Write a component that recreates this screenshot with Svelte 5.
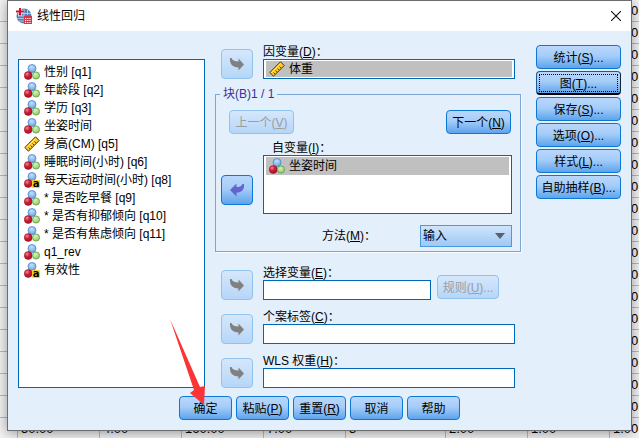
<script>
  const variables = [
    { name: "性别 [q1]", type: "nominal" },
    { name: "年龄段 [q2]", type: "nominal" },
    { name: "学历 [q3]", type: "nominal" },
    { name: "坐姿时间", type: "nominal" },
    { name: "身高(CM) [q5]", type: "scale" },
    { name: "睡眠时间(小时) [q6]", type: "nominal" },
    { name: "每天运动时间(小时) [q8]", type: "string" },
    { name: "* 是否吃早餐 [q9]", type: "nominal" },
    { name: "* 是否有抑郁倾向 [q10]", type: "nominal" },
    { name: "* 是否有焦虑倾向 [q11]", type: "nominal" },
    { name: "q1_rev", type: "nominal" },
    { name: "有效性", type: "string" },
  ];

  const options = [
    { text: "统计", key: "S" },
    { text: "图", key: "T" },
    { text: "保存", key: "S" },
    { text: "选项", key: "O" },
    { text: "样式", key: "L" },
    { text: "自助抽样", key: "B" },
  ];

  const actions = [
    { text: "确定" },
    { text: "粘贴", key: "P" },
    { text: "重置", key: "R" },
    { text: "取消" },
    { text: "帮助" },
  ];

  // only the last column and the last record stick out from behind the dialog
  const blank = ["", "", "", "", "", "", "", "1.00"];
  const record = ["50.00", "4.00", "160.00", "7.00", "3", "2.00", "1.00", "1.00"];
  const rows = [...Array.from({ length: 19 }, () => blank), record];

  let picked = $state("");
  let focused = $state("图");
  let method = $state("enter");
  let selection = $state("");
  let caseLabel = $state("");
  let weight = $state("");
</script>

{#snippet typeIcon(type)}
  <svg class="icon" viewBox="0 0 16 16" aria-hidden="true">
    {#if type === "scale"}
      <path d="M.8 11.500 L11.500 .8 L15.200 4.500 L4.500 15.200 Z" fill="#ffc926" stroke="#3a3320" stroke-width="1" />
      <path d="M2.500 11.500 L11.500 2.500" stroke="#fff0a0" stroke-width="1" />
      <path d="M4.500 11.500l1.500 1.500M6.500 9.500l1.500 1.500M8.500 7.500l1.500 1.500M10.500 5.500l1.500 1.500" stroke="#4a3c10" stroke-width=".9" />
    {:else}
      <circle cx="8" cy="4.500" r="4" fill="url(#ball-blue)" stroke="#4a86c8" stroke-width=".8" />
      <circle cx="4.200" cy="11.500" r="3.900" fill="url(#ball-red)" stroke="#9c1226" stroke-width=".6" />
      {#if type === "string"}
        <rect x="8" y="8" width="8" height="8" rx="1" fill="#ffd02a" />
        <text x="12" y="15" text-anchor="middle" class="letter">a</text>
      {:else}
        <circle cx="12" cy="11.500" r="3.600" fill="url(#ball-green)" stroke="#5f9d3f" stroke-width=".8" />
      {/if}
    {/if}
  </svg>
{/snippet}

{#snippet move(label, back = false)}
  <button type="button" class="btn move" disabled={!back} aria-label={label}>
    <svg class="icon" viewBox="0 0 16 16" aria-hidden="true">
      {#if back}
        <path d="M1 8 L7.500 1.500 V5 C10.500 5 12.500 4.500 13.500 2 H15 C15.500 7.500 13 10.500 7.500 10.800 V14.500 Z" fill="#6464cc" />
      {:else}
        <path d="M15 8.500 L9.500 2.500 V5.500 C6 5.500 3.500 4.800 2.500 2 H1 C.5 8 3.500 11.500 9.500 11.500 V14.500 Z" fill="#808080" />
      {/if}
    </svg>
  </button>
{/snippet}

<div class="desktop">
  <table class="sheet">
    <colgroup>
      <col class="edge" />
      <col /><col /><col /><col />
      <col class="wide" />
      <col /><col /><col />
    </colgroup>
    <tbody>
      {#each rows as row}
        <tr>
          <td></td>
          {#each row as value}
            <td>{value}</td>
          {/each}
        </tr>
      {/each}
    </tbody>
  </table>

  <div class="dialog" role="dialog" aria-labelledby="title">
    <svg class="defs" aria-hidden="true">
      <defs>
        <radialGradient id="ball-blue" cx=".45" cy=".3" r=".7">
          <stop offset="0" stop-color="#c4e0fb" />
          <stop offset="1" stop-color="#6ba6e6" />
        </radialGradient>
        <radialGradient id="ball-red" cx=".35" cy=".3" r=".7">
          <stop offset="0" stop-color="#f08a92" />
          <stop offset=".5" stop-color="#d01c34" />
          <stop offset="1" stop-color="#a81228" />
        </radialGradient>
        <radialGradient id="ball-green" cx=".4" cy=".3" r=".7">
          <stop offset="0" stop-color="#d8f2bc" />
          <stop offset="1" stop-color="#93c96c" />
        </radialGradient>
      </defs>
    </svg>

    <header class="titlebar">
      <svg class="icon" viewBox="0 0 16 16" aria-hidden="true">
        <circle cx="8" cy="8" r="7.500" fill="#4f80b5" />
        <path d="M4 5.500H15M2 8H8M1.500 10.500H8M3 13H8M8 1V8M11.500 2V7" stroke="#c6d9ec" stroke-width=".8" fill="none" />
        <path d="M4 0V8M0 3.500H8" stroke="#fff" stroke-width="3.200" />
        <path d="M4 0V7.500M0 3.500H8" stroke="#d2102e" stroke-width="2" />
        <rect x="8" y="8" width="8" height="8" fill="#d8354d" />
        <path d="M9 10.500H15M9 12.500H15M9 14.500H15" stroke="#fff" stroke-width="1.200" stroke-dasharray="1.200 1" />
      </svg>
      <h1 id="title">线性回归</h1>
      <button type="button" class="close" aria-label="关闭">
        <svg viewBox="0 0 10 10" aria-hidden="true">
          <path d="M0 0L10 10M10 0L0 10" stroke="#111" stroke-width="1.100" />
        </svg>
      </button>
    </header>

    <div class="body">
      <ul class="box source" role="listbox" aria-label="变量">
        {#each variables as v}
          <li role="option" aria-selected={picked === v.name}>
            {@render typeIcon(v.type)}
            <span>{v.name}</span>
          </li>
        {/each}
      </ul>

      <div class="targets">
        <div class="row">
          {@render move("移至因变量")}
          <div class="field">
            <span class="label" id="dependent">因变量(<u>D</u>)：</span>
            <ul class="box single" role="listbox" aria-labelledby="dependent">
              <li role="option" aria-selected="true">
                {@render typeIcon("scale")}
                <span>体重</span>
              </li>
            </ul>
          </div>
        </div>

        <fieldset>
          <legend>块(B)1 / 1</legend>
          <div class="pager">
            <button type="button" class="btn" disabled>上一个(<u>V</u>)</button>
            <button type="button" class="btn">下一个(<u>N</u>)</button>
          </div>
          <div class="row block">
            {@render move("移出自变量", true)}
            <div class="field">
              <span class="label indent" id="independent">自变量(<u>I</u>)：</span>
              <ul class="box multi" role="listbox" aria-labelledby="independent">
                <li role="option" aria-selected="true">
                  {@render typeIcon("nominal")}
                  <span>坐姿时间</span>
                </li>
              </ul>
            </div>
          </div>
          <div class="method">
            <label for="method">方法(<u>M</u>)：</label>
            <div class="select">
              <select id="method" bind:value={method}>
                <option value="enter">输入</option>
                <option value="stepwise">步进</option>
                <option value="remove">除去</option>
                <option value="backward">后退</option>
                <option value="forward">前进</option>
              </select>
              <svg viewBox="0 0 10 6" aria-hidden="true"><path d="M0 0H10L5 6Z" fill="#5c6066" /></svg>
            </div>
          </div>
        </fieldset>

        <div class="rest">
          <div class="row">
            {@render move("移至选择变量")}
            <div class="field">
              <label class="label" for="selection">选择变量(<u>E</u>)：</label>
              <input class="box" id="selection" bind:value={selection} />
            </div>
            <button type="button" class="btn rule" disabled>规则(<u>U</u>)...</button>
          </div>
          <div class="row">
            {@render move("移至个案标签")}
            <div class="field">
              <label class="label" for="case">个案标签(<u>C</u>)：</label>
              <input class="box" id="case" bind:value={caseLabel} />
            </div>
          </div>
          <div class="row">
            {@render move("移至权重")}
            <div class="field">
              <label class="label" for="weight">WLS 权重(<u>H</u>)：</label>
              <input class="box" id="weight" bind:value={weight} />
            </div>
          </div>
        </div>
      </div>

      <div class="options">
        {#each options as o}
          <button type="button" class="btn" class:focused={focused === o.text} onclick={() => (focused = o.text)}>
            {o.text}(<u>{o.key}</u>)...
          </button>
        {/each}
      </div>
    </div>

    <footer>
      {#each actions as a}
        <button type="button" class="btn">
          {a.text}{#if a.key}(<u>{a.key}</u>){/if}
        </button>
      {/each}
    </footer>

    <!-- red pointer at the OK button -->
    <svg class="pointer" viewBox="0 0 36 86" aria-hidden="true">
      <path d="M0 0 L30 68 L35 67 L34 86 L20 74 L24 71 Z" fill="#fb3535" />
    </svg>
  </div>
</div>

<style>
  :global(body) {
    margin: 0;
    background: #f4f4f4;
  }
  .desktop {
    position: relative;
    min-height: 100vh;
    overflow: hidden;
    font: 12px/14px "Liberation Sans", "Noto Sans CJK SC", sans-serif;
    color: #000;
  }
  .sheet {
    position: absolute;
    top: 0;
    left: 0;
    width: 692px;
    table-layout: fixed;
    border-collapse: separate;
    border-spacing: 0;
    background: #f4f4f4;
  }
  col {
    width: 82px;
  }
  col.edge {
    width: 18px;
  }
  col.wide {
    width: 100px;
  }
  td {
    box-sizing: border-box;
    height: 22px;
    padding: 0 3px;
    border-right: 1px solid #a9bfd3;
    border-bottom: 1px solid #a9bfd3;
    font-size: 13px;
    white-space: nowrap;
  }
  .dialog {
    position: relative;
    margin: 0 7px 7px;
    border: 1px solid #6c6e70;
    background: #e3effb;
    box-shadow: 0 2px 12px rgba(0, 0, 0, 0.4);
  }
  .defs {
    position: absolute;
    width: 0;
    height: 0;
  }
  .icon {
    display: block;
    flex: none;
    width: 16px;
    height: 16px;
  }
  .letter {
    font: bold 10px "DejaVu Sans", sans-serif;
  }
  .titlebar {
    display: flex;
    align-items: center;
    gap: 5px;
    height: 30px;
    padding: 0 10px 0 8px;
    background: #fff;
  }
  h1 {
    flex: 1;
    margin: 0;
    font-size: 12px;
    font-weight: normal;
  }
  .close {
    padding: 0;
    border: 0;
    background: none;
  }
  .close svg {
    display: block;
    width: 10px;
    height: 10px;
  }
  .body {
    display: grid;
    grid-template-columns: 187px 1fr 85px;
    column-gap: 10px;
    padding: 14px 10px 0;
  }
  .box {
    box-sizing: border-box;
    margin: 0;
    padding: 1px 2px;
    border: 1px solid #0066b8;
    border-radius: 0;
    background: #fff;
    list-style: none;
  }
  .box li {
    display: flex;
    align-items: center;
    gap: 4px;
    height: 18px;
    padding: 0 3px;
    white-space: nowrap;
  }
  .box li[aria-selected="true"] {
    background: #c0c0c0;
  }
  .source {
    margin-top: 14px;
    padding-top: 3px;
  }
  .targets {
    min-width: 0;
    margin-right: 5px;
  }
  .row {
    display: flex;
    align-items: flex-end;
    gap: 10px;
    padding: 0 6px;
  }
  .field {
    flex: 1;
    min-width: 0;
  }
  .label {
    display: block;
    height: 14px;
    white-space: nowrap;
  }
  .indent {
    padding-left: 9px;
  }
  .single,
  input {
    display: block;
    width: 100%;
    height: 20px;
  }
  .single li {
    height: 16px;
  }
  .multi {
    height: 59px;
  }
  input,
  select,
  button {
    font: inherit;
    color: inherit;
  }
  .btn {
    box-sizing: border-box;
    height: 24px;
    padding: 2px 4px 0;
    border: 1px solid #0b78d7;
    border-radius: 4px;
    background: linear-gradient(#b9d7fb, #a5cdf9 45%, #5ea4ec);
    white-space: nowrap;
  }
  .btn:disabled {
    border-color: #90c3ef;
    background: linear-gradient(#d5e7fc, #b6d6f8);
    color: #9b9da0;
  }
  .focused {
    border-color: #1a5a94 #10253a #000 #1a5a94;
    border-bottom-width: 2px;
    outline: 1px dotted #000;
    outline-offset: -4px;
  }
  .move {
    display: grid;
    flex: none;
    place-items: center;
    width: 32px;
    height: 30px;
    padding: 0;
  }
  fieldset {
    min-width: 0;
    margin: 8px 0 14px;
    padding: 9px 0 4px;
    border: 1px solid #7ba7d4;
    box-shadow: 1px 1px #f8fcff;
  }
  legend {
    margin-left: 4px;
    padding: 0 3px;
    color: #33339b;
  }
  .pager {
    display: flex;
    justify-content: space-between;
    padding: 0 9px 0 13px;
  }
  .pager .btn {
    width: 65px;
  }
  .block {
    margin: 7px 0 11px;
    padding: 0 8px 0 5px;
  }
  .block :global(.move) {
    margin-bottom: 9px;
  }
  .method {
    display: flex;
    align-items: center;
    justify-content: flex-end;
    padding-right: 8px;
  }
  .method label {
    width: 98px;
  }
  .select {
    position: relative;
    width: 92px;
  }
  select {
    display: block;
    box-sizing: border-box;
    width: 100%;
    height: 22px;
    padding: 0 2px;
    border: 1px solid #4a9ae0;
    border-radius: 0;
    appearance: none;
    background: linear-gradient(#d0e4fb, #9ec8f5);
  }
  .select svg {
    position: absolute;
    top: 8px;
    right: 7px;
    width: 10px;
    height: 6px;
    pointer-events: none;
  }
  .rest {
    display: grid;
    gap: 10px;
  }
  .rule {
    flex: none;
    width: 62px;
    margin: 0 16px 1px -4px;
  }
  .options {
    display: flex;
    flex-direction: column;
    gap: 2px;
  }
  footer {
    display: flex;
    justify-content: center;
    gap: 4px;
    padding: 8px 0 10px;
  }
  footer .btn {
    width: 53px;
  }
  .pointer {
    position: absolute;
    bottom: 25px;
    left: 162px;
    width: 36px;
    height: 86px;
    pointer-events: none;
  }
</style>
